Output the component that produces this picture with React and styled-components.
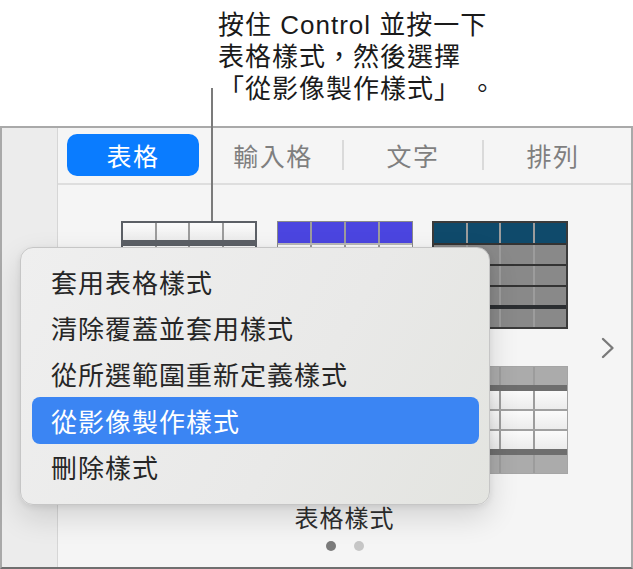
import React from "react";
import styled, {createGlobalStyle} from "styled-components";

const GlobalStyle = createGlobalStyle`
  html, body {
    margin: 0;
    padding: 0;
    background: #ffffff;
  }
  body {
    font-family: "Liberation Sans", "Noto Sans CJK TC", sans-serif;
  }
`;

const Page = styled.div`
  position: relative;
  width: 633px;
  height: 569px;
  overflow: hidden;
  display: flex;
  flex-direction: column;
`;

const Callout = styled.div`
  height: 126px;
  box-sizing: border-box;
  padding: 9px 0 0 218px;
  font-size: 26px;
  line-height: 32px;
  letter-spacing: 1px;
  color: #1a1a1a;
`;

const Leader = styled.div`
  position: absolute;
  left: 211px;
  top: 88px;
  width: 2px;
  height: 133px;
  background: #7b7b7b;
  z-index: 3;
`;

const Panel = styled.div`
  flex: 1;
  display: flex;
  box-sizing: border-box;
  border: 2px solid #a9a9a9;
  border-bottom-color: #6f6f6f;
  background: #f5f5f5;
`;

const Sidebar = styled.div`
  width: 55px;
  background: #ececec;
  border-right: 1px solid #d6d6d6;
`;

const Main = styled.div`
  flex: 1;
  display: flex;
  flex-direction: column;
`;

const Tabs = styled.div`
  display: grid;
  grid-template-columns: repeat(4, 140px);
  padding: 6px 0 7px 5px;
  border-bottom: 2px solid #dedede;
`;

const Tab = styled.div`
  height: 42px;
  display: flex;
  align-items: center;
  justify-content: center;
  font-size: 25px;
  letter-spacing: 1.5px;
  color: ${p => p.$active ? "#ffffff" : "#7f7f7f"};
  background: ${p => p.$active ? "#0a7cff" : "transparent"};
  border-radius: 10px;
  margin: 0 ${p => p.$active ? "4px" : "0"};
  position: relative;

  &::before {
    content: "";
    display: ${p => p.$sep ? "block" : "none"};
    position: absolute;
    left: -1px;
    top: 6px;
    width: 2px;
    height: 30px;
    background: #dadada;
  }
`;

const Content = styled.div`
  flex: 1;
  display: flex;
  flex-direction: column;
  align-items: center;
  padding-top: 36px;
`;

const Stage = styled.div`
  width: 100%;
  display: grid;
  grid-template-columns: 1fr auto 1fr;
  align-items: center;
`;

const Thumbs = styled.div`
  grid-column: 2;
  display: grid;
  grid-template-columns: repeat(3, 136px);
  column-gap: 19.5px;
  row-gap: 37px;
`;

const Chevron = styled.svg`
  justify-self: end;
  margin-right: 16px;
`;

const MiniTable = styled.div`
  height: 108px;
  box-sizing: border-box;
  border: ${p => p.$bw}px solid ${p => p.$border};
  display: flex;
  flex-direction: column;
  background: ${p => p.$border};
`;

const Row = styled.div`
  height: ${p => p.$h}px;
  display: flex;
  background: ${p => p.$bg};
`;

const Cell = styled.div`
  flex: 1;
  & + & {
    border-left: 2px solid ${p => p.$line};
  }
`;

const Label = styled.div`
  margin-top: 31px;
  font-size: 24px;
  line-height: 28px;
  letter-spacing: 1px;
  color: #2e2e2e;
`;

const Dots = styled.div`
  display: flex;
  gap: 18px;
  margin-top: 8px;
`;

const Dot = styled.span`
  width: 10px;
  height: 10px;
  border-radius: 50%;
  background: ${p => p.$on ? "#7b7b7b" : "#c6c6c6"};
`;

const Menu = styled.div`
  position: absolute;
  left: 20px;
  top: 247px;
  width: 470px;
  box-sizing: border-box;
  padding: 10px 10px 14px 11px;
  border-radius: 13px;
  border: 1px solid #c6c6c6;
  background: linear-gradient(120deg, #efefef 0%, #e9e9e8 60%, #e3e4e0 100%);
  box-shadow: 0 12px 30px rgba(0, 0, 0, 0.14), 0 2px 6px rgba(0, 0, 0, 0.08);
  z-index: 2;
`;

const Item = styled.div`
  height: 46.4px;
  display: flex;
  align-items: center;
  padding-left: 19px;
  border-radius: 8px;
  font-size: 26px;
  letter-spacing: 1px;
  color: ${p => p.$selected ? "#ffffff" : "#262626"};
  background: ${p => p.$selected ? "#3b85f3" : "transparent"};
`;

const whiteCell = "linear-gradient(#fbfbfb, #ececec)";

const styles = {
    plain: {
        border: "#5c6066", bw: 2, rows: [
            {h: 17, bg: whiteCell, line: "#5c6066"},
            {h: 6, bg: "#5c6066"},
            {h: 18, bg: whiteCell, line: "#bdbdbd"},
            {h: 2, bg: "#bdbdbd"},
            {h: 18, bg: whiteCell, line: "#bdbdbd"},
            {h: 2, bg: "#bdbdbd"},
            {h: 18, bg: whiteCell, line: "#bdbdbd"},
            {h: 2, bg: "#bdbdbd"},
            {h: 21, bg: whiteCell, line: "#bdbdbd"},
        ]
    },
    blue: {
        border: "#8a8a8a", bw: 1, rows: [
            {h: 21, bg: "#4b45e0", line: "#f2f2f2"},
            {h: 2, bg: "#b8b8b8"},
            {h: 19, bg: whiteCell, line: "#b8b8b8"},
            {h: 2, bg: "#b8b8b8"},
            {h: 19, bg: whiteCell, line: "#b8b8b8"},
            {h: 2, bg: "#b8b8b8"},
            {h: 19, bg: whiteCell, line: "#b8b8b8"},
            {h: 2, bg: "#b8b8b8"},
            {h: 20, bg: whiteCell, line: "#b8b8b8"},
        ]
    },
    teal: {
        border: "#3b3b3b", bw: 2, rows: [
            {h: 20, bg: "#0f4a6b", line: "#6f7a80"},
            {h: 2, bg: "#333333"},
            {h: 19, bg: "#898989", line: "#333333"},
            {h: 2, bg: "#333333"},
            {h: 19, bg: "#898989", line: "#333333"},
            {h: 2, bg: "#333333"},
            {h: 18, bg: "#898989", line: "#333333"},
            {h: 4, bg: "#2b2e31"},
            {h: 18, bg: "#898989", line: "#333333"},
        ]
    },
    gray: {
        border: "#a5a5a5", bw: 1, rows: [
            {h: 18, bg: "#ababab", line: "#f7f7f7"},
            {h: 6, bg: "#6e6e6e"},
            {h: 18, bg: whiteCell, line: "#9c9c9c"},
            {h: 2, bg: "#a0a0a0"},
            {h: 18, bg: whiteCell, line: "#9c9c9c"},
            {h: 2, bg: "#a0a0a0"},
            {h: 18, bg: whiteCell, line: "#9c9c9c"},
            {h: 6, bg: "#6e6e6e"},
            {h: 18, bg: "#ababab", line: "#f7f7f7"},
        ]
    },
};

const thumbList = ["plain", "blue", "teal", "plain", "blue", "gray"];

const menuItems = [
    "套用表格樣式",
    "清除覆蓋並套用樣式",
    "從所選範圍重新定義樣式",
    "從影像製作樣式",
    "刪除樣式",
];

function Thumb({kind}) {
    const s = styles[kind];
    return (
        <MiniTable $border={s.border} $bw={s.bw}>
            {s.rows.map((r, i) =>
                <Row key={i} $h={r.h} $bg={r.bg}>
                    {r.line
                        ? [0, 1, 2, 3].map(c => <Cell key={c} $line={r.line}/>)
                        : null}
                </Row>
            )}
        </MiniTable>
    );
}

export default function App() {
    return (
        <Page>
            <GlobalStyle/>
            <Callout>
                按住 Control 並按一下<br/>
                表格樣式，然後選擇<br/>
                「從影像製作樣式」 。
            </Callout>
            <Leader/>
            <Panel>
                <Sidebar/>
                <Main>
                    <Tabs>
                        <Tab $active>表格</Tab>
                        <Tab>輸入格</Tab>
                        <Tab $sep>文字</Tab>
                        <Tab $sep>排列</Tab>
                    </Tabs>
                    <Content>
                        <Stage>
                            <Thumbs>
                                {thumbList.map((k, i) => <Thumb key={i} kind={k}/>)}
                            </Thumbs>
                            <Chevron width="14" height="22" viewBox="0 0 14 22">
                                <path d="M2 2 L11.5 11 L2 20" fill="none" stroke="#7a7a7a"
                                      strokeWidth="2.4" strokeLinecap="round" strokeLinejoin="round"/>
                            </Chevron>
                        </Stage>
                        <Label>表格樣式</Label>
                        <Dots>
                            <Dot $on/>
                            <Dot/>
                        </Dots>
                    </Content>
                </Main>
            </Panel>
            <Menu>
                {menuItems.map(text =>
                    <Item key={text} $selected={text === "從影像製作樣式"}>{text}</Item>
                )}
            </Menu>
        </Page>
    );
}
